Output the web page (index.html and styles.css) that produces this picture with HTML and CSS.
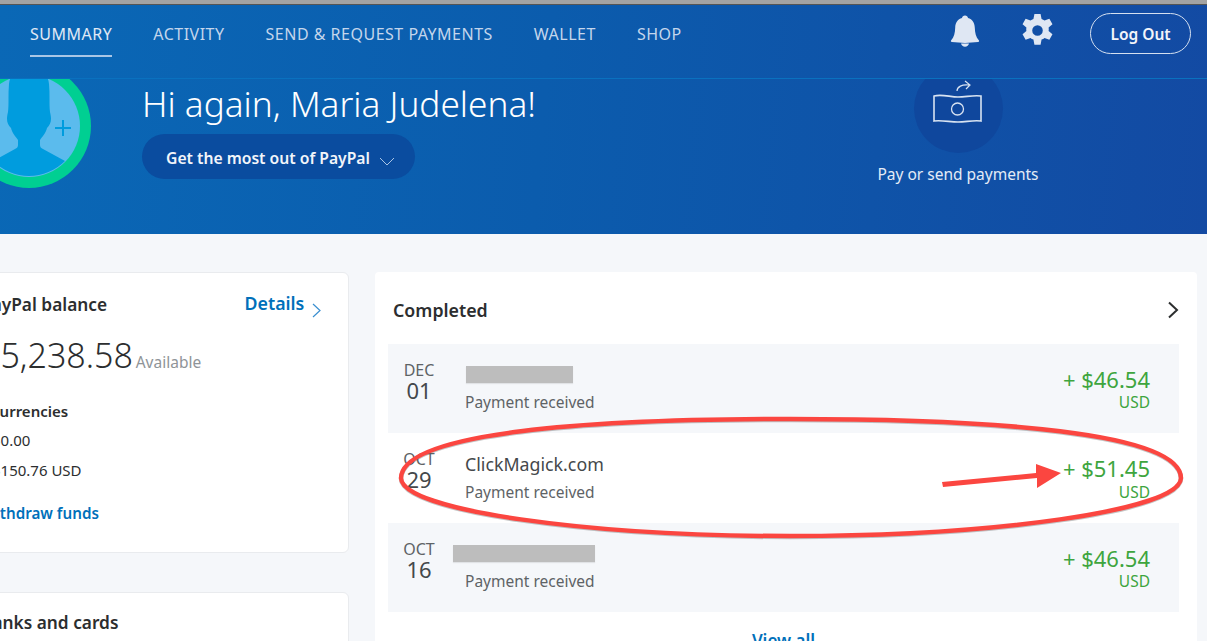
FILE: index.html
```html
<!DOCTYPE html>
<html>
<head>
  <title>PayPal Summary</title>
  <link rel="stylesheet" href="styles.css">
</head>
<body>
  <div id="top-strip"></div>

  <div id="banner">
    <div id="nav">
      <div class="nav-links">
        <a class="nav-link active">Summary</a>
        <a class="nav-link">Activity</a>
        <a class="nav-link">Send &amp; Request Payments</a>
        <a class="nav-link">Wallet</a>
        <a class="nav-link">Shop</a>
      </div>
      <div class="nav-actions">
        <svg class="bell" width="32" height="34" viewBox="0 0 32 34">
          <path fill="#dfe7f3" d="M16 1.500c1.700 0 2.800 1 3 2.600 4.400 1.300 6.600 4.800 6.800 9.600.2 5.300 1.100 9.300 4 12.600.6.700.3 1.700-.7 1.800-8.800 1.100-17.400 1.100-26.200 0-1-.1-1.300-1.100-.7-1.800 2.900-3.300 3.800-7.300 4-12.600.2-4.800 2.400-8.300 6.800-9.600.2-1.600 1.300-2.600 3-2.600z"/>
          <path fill="#dfe7f3" d="M12 29.500h8c-.4 2-2 3.200-4 3.200s-3.600-1.200-4-3.200z"/>
        </svg>
        <svg class="gear" width="33" height="33" viewBox="1.500 1 29 30">
          <path fill="#dfe7f3" fill-rule="evenodd" d="M13.200 1h5.600l.9 4.600c1 .3 1.900.8 2.700 1.400l4.400-1.600 2.800 4.900-3.500 3c.2 1 .2 2.200 0 3.200l3.500 3-2.800 4.900-4.400-1.600c-.8.600-1.700 1.100-2.700 1.400l-.9 4.800h-5.600l-.9-4.800c-1-.3-1.900-.8-2.700-1.400l-4.400 1.600-2.800-4.900 3.500-3c-.2-1-.2-2.200 0-3.200l-3.500-3 2.800-4.900 4.400 1.600c.8-.6 1.700-1.100 2.700-1.400zM16 11.200a4.800 4.800 0 1 0 0 9.600 4.800 4.800 0 0 0 0-9.600z"/>
        </svg>
        <button id="logout">Log Out</button>
      </div>
    </div>

    <div id="hero">
      <div class="avatar">
        <svg width="124" height="124" viewBox="0 0 124 124">
          <circle cx="62" cy="62" r="62" fill="#00cf92"/>
          <circle cx="62" cy="62" r="51" fill="#5bbbed"/>
          <path fill="#009cde" d="M62 4C48 4 43 10 42 20C41 30 42 40 41 48C39 56 40 60 44 64C45 69 49 73 51 76L51 81C51 83 50 84 48 85L26 97A51 51 0 0 0 98 97L76 85C74 84 73 83 73 81L73 76C75 73 79 69 80 64C84 60 85 56 83 48C82 40 83 30 82 20C81 10 76 4 62 4z"/>
          <path stroke="#009cde" stroke-width="2" fill="none" d="M96 56v16M88 64h16"/>
        </svg>
      </div>
      <div class="greeting">
        <h1>Hi again, Maria Judelena!</h1>
        <button id="getMost">Get the most out of PayPal
          <svg width="16" height="9" viewBox="0 0 16 9"><path d="M1 1l7 7 7-7" fill="none" stroke="#a9c4e6" stroke-width="1"/></svg>
        </button>
      </div>
      <div class="quick-action">
        <div class="quick-circle">
          <svg width="50" height="50" viewBox="0 0 50 50">
            <path d="M1 13c8-2 16 1 24 1s15-2 23-1v25c-8-1-15 1-23 1s-16-2-24-1z" fill="none" stroke="#d8e3f2" stroke-width="1.600"/>
            <circle cx="24.500" cy="26" r="6" fill="none" stroke="#d8e3f2" stroke-width="1.300"/>
            <path d="M24 8c0-4 5-7 12-6M32-2l5 4-4 4" fill="none" stroke="#d8e3f2" stroke-width="1.200"/>
          </svg>
        </div>
        <div class="quick-label">Pay or send payments</div>
      </div>
    </div>
  </div>

  <div id="main">
    <div class="left-col">
      <div class="card balance-card">
        <div class="balance-head">
          <span class="card-title">PayPal balance</span>
          <a class="details">Details
            <svg width="9" height="15" viewBox="0 0 9 15"><path d="M1 1l7 6.500-7 6.500" fill="none" stroke="#3a8fd0" stroke-width="1.200"/></svg>
          </a>
        </div>
        <div class="balance-amount">$5,238.58 <span class="available">Available</span></div>
        <div class="currencies">Currencies</div>
        <div class="currency-row">$0.00</div>
        <div class="currency-row">$150.76 USD</div>
        <a class="withdraw">Withdraw funds</a>
      </div>
      <div class="card banks-card">
        <span class="card-title">Banks and cards</span>
      </div>
    </div>

    <div class="card activity-card">
      <div class="activity-head">
        <span class="activity-title">Completed</span>
        <svg width="12" height="18" viewBox="0 0 12 18"><path d="M2 1.500l8 7.500-8 7.500" fill="none" stroke="#2c2e2f" stroke-width="2"/></svg>
      </div>

      <div class="tx shaded">
        <div class="tx-date"><span class="tx-month">Dec</span><span class="tx-day">01</span></div>
        <div class="tx-info">
          <div class="tx-blur blur-short"></div>
          <div class="tx-type">Payment received</div>
        </div>
        <div class="tx-amount"><span class="tx-value">+ $46.54</span><span class="tx-cur">USD</span></div>
      </div>

      <div class="tx">
        <div class="tx-date"><span class="tx-month">Oct</span><span class="tx-day">29</span></div>
        <div class="tx-info">
          <div class="tx-name">ClickMagick.com</div>
          <div class="tx-type">Payment received</div>
        </div>
        <div class="tx-amount"><span class="tx-value">+ $51.45</span><span class="tx-cur">USD</span></div>
      </div>

      <div class="tx shaded">
        <div class="tx-date"><span class="tx-month">Oct</span><span class="tx-day">16</span></div>
        <div class="tx-info">
          <div class="tx-blur blur-long"></div>
          <div class="tx-type">Payment received</div>
        </div>
        <div class="tx-amount"><span class="tx-value">+ $46.54</span><span class="tx-cur">USD</span></div>
      </div>

      <a class="view-all">View all</a>
    </div>
  </div>

  <!-- red annotation drawn on top of the screenshot -->
  <svg id="annotation" width="1207" height="641" viewBox="0 0 1207 641">
    <g class="mark-shadow" fill="none" stroke="#555" stroke-width="4.500">
      <path d="M401 479C402 433 590 420 790 420C990 420 1180 433 1181 479C1180 512 990 537 790 537C590 537 402 512 401 479z"/>
    </g>
    <g fill="none" stroke="#fb4640" stroke-width="4.500">
      <path d="M401 478C402 432 590 419 790 419C990 419 1180 432 1181 478C1180 511 990 536 790 536C590 536 402 511 401 478z"/>
    </g>
    <path fill="#fb4640" d="M942 482l94-9v-9l25 9-24 15v-10l-94 9z"/>
  </svg>
</body>
</html>
```

FILE: styles.css
```css
:root {
  --page-bg: #f5f7fa;
  --text-color: #2c2e2f;
  --muted-color: #5e6366;
  --link-color: #0070ba;
  --green-color: #3ea53e;
}

* {
  box-sizing: border-box;
}

html, body {
  margin: 0;
  height: 641px;
  overflow: hidden;
}

body {
  position: relative;
  background-color: var(--page-bg);
  color: var(--text-color);
  font-family: "Noto Sans", Lato, sans-serif;
  font-size: 15px;
}

button {
  font-family: inherit;
  cursor: pointer;
}

#top-strip {
  height: 5px;
  background-color: #a3a3a3;
  border-bottom: 1px solid #555;
}

#banner {
  height: 229px;
  background: linear-gradient(95deg, #0a68b6 0%, #0b5cad 45%, #134aa3 100%);
}

/* Nav */
#nav {
  height: 74px;
  display: flex;
  justify-content: space-between;
  align-items: flex-start;
  padding: 0 16px 0 30px;
  border-bottom: 1px solid #0a71bf;
  position: relative;
  z-index: 1;
}

.nav-links {
  display: flex;
  gap: 41px;
  padding-top: 18px;
}

.nav-link {
  height: 34px;
  font-size: 16px;
  color: #c4d6ec;
  text-transform: uppercase;
  letter-spacing: 0.5px;
  line-height: 22px;
  border-bottom: 2px solid transparent;
  white-space: nowrap;
}

.nav-link.active {
  color: #e0e9f5;
  border-bottom-color: #a9c6e6;
}

.nav-actions {
  display: flex;
  align-items: flex-start;
  padding-top: 8px;
}

.bell {
  margin: 1px 40px 0 0;
}

.gear {
  margin: 1px 36px 0 0;
}

#logout {
  width: 101px;
  height: 41px;
  background: transparent;
  color: #f2f5fa;
  border: 1.5px solid #d5e0f0;
  border-radius: 21px;
  font-size: 15.500px;
  font-weight: 600;
}

/* Hero */
#hero {
  height: 155px;
  display: flex;
  align-items: flex-start;
  overflow: hidden;
}

.avatar {
  width: 124px;
  height: 124px;
  margin: -15px 0 0 -33px;
  flex-shrink: 0;
}

.greeting {
  width: 773px;
  margin-left: 51px;
}

.greeting h1 {
  margin: 0;
  height: 55px;
  font-size: 35.200px;
  font-weight: 300;
  line-height: 48px;
  color: #fff;
}

#getMost {
  width: 273px;
  height: 45px;
  padding: 2px 0 0 24px;
  display: flex;
  align-items: center;
  gap: 9px;
  background-color: #0a4c9f;
  color: #f2f5fa;
  border: none;
  border-radius: 23px;
  font-size: 15.700px;
  font-weight: 600;
  white-space: nowrap;
}

#getMost svg {
  margin-top: 8px;
}

.quick-action {
  width: 200px;
  margin-left: -57px;
  text-align: center;
}

.quick-circle {
  width: 89px;
  height: 89px;
  margin: -15px auto 0;
  padding-top: 19px;
  border-radius: 50%;
  background-color: #0f479d;
}

.quick-circle svg {
  overflow: visible;
  display: block;
  margin: 0 auto;
}

.quick-label {
  margin-top: 10px;
  font-size: 15.500px;
  color: #e4ebf6;
}

/* Cards */
#main {
  display: flex;
  align-items: flex-start;
  gap: 26px;
  margin-left: -50px;
  padding-top: 38px;
}

.left-col {
  width: 399px;
  flex-shrink: 0;
}

.card {
  background-color: #fff;
  border-radius: 6px;
}

.balance-card, .banks-card {
  border: 1px solid #e9ebee;
  padding-left: 30px;
}

.balance-card {
  height: 281px;
  padding-top: 18px;
  padding-right: 27px;
}

.banks-card {
  height: 80px;
  margin-top: 39px;
  padding-top: 18px;
}

.balance-head {
  display: flex;
  justify-content: space-between;
  align-items: center;
}

.card-title {
  font-size: 17.300px;
  font-weight: 600;
  white-space: nowrap;
}

.details {
  font-size: 17.800px;
  font-weight: 600;
  color: var(--link-color);
}

.details svg {
  margin-left: 3px;
  vertical-align: -8px;
}

.balance-amount {
  margin-top: 13px;
  font-size: 34px;
  font-weight: 300;
  line-height: 48px;
  white-space: nowrap;
}

.available {
  margin-left: -6px;
  font-size: 15.500px;
  font-weight: 400;
  color: #8f9498;
}

.currencies {
  margin: 15px 0 0 9px;
  font-size: 15px;
  font-weight: 600;
}

.currency-row {
  margin: 9px 0 0 11px;
  font-size: 15px;
  line-height: 21px;
}

.withdraw {
  display: block;
  margin-top: 22px;
  font-size: 15.200px;
  font-weight: 600;
  color: var(--link-color);
  white-space: nowrap;
}

.activity-card {
  width: 822px;
  height: 400px;
  padding: 0 18px 0 13px;
  border-radius: 4px;
}

.activity-head {
  height: 71.500px;
  display: flex;
  justify-content: space-between;
  align-items: center;
  padding: 4px 0 0 5px;
}

.activity-title {
  font-size: 17.800px;
  font-weight: 600;
}

/* Transaction rows */
.tx {
  height: 89.500px;
  display: flex;
  align-items: stretch;
}

.tx.shaded {
  background-color: var(--page-bg);
}

.tx-date {
  width: 62px;
  padding-top: 18px;
  display: flex;
  flex-direction: column;
  align-items: center;
}

.tx-month {
  font-size: 16px;
  line-height: 17px;
  text-transform: uppercase;
  color: var(--muted-color);
}

.tx-day {
  margin-top: -1px;
  font-size: 22px;
  line-height: 24px;
  color: #44484b;
}

.tx-info {
  flex: 1;
  margin-left: 15px;
  padding-top: 20px;
}

.tx-name {
  height: 22px;
  font-size: 17.800px;
  line-height: 22px;
  color: #44484b;
}

.tx-blur {
  height: 17px;
  margin: 2px 0 8px;
  background-color: #bdbdbd;
  box-shadow: 0 1px 1px rgba(0, 0, 0, 0.08);
}

.blur-short {
  width: 107px;
  margin-left: 1px;
}

.blur-long {
  width: 142px;
  margin-left: -12px;
}

.tx-type {
  margin-top: 6px;
  font-size: 15.500px;
  color: var(--muted-color);
}

.tx-amount {
  padding: 22px 29px 0 0;
  display: flex;
  flex-direction: column;
  align-items: flex-end;
  color: var(--green-color);
}

.tx-value {
  font-size: 22px;
  line-height: 26px;
}

.tx-cur {
  margin-top: 1.500px;
  font-size: 15.500px;
  line-height: 18px;
}

.view-all {
  display: block;
  margin-top: 17px;
  text-align: center;
  font-size: 17px;
  font-weight: 600;
  color: var(--link-color);
}

/* Annotation */
#annotation {
  position: absolute;
  top: 0;
  left: 0;
  pointer-events: none;
}

.mark-shadow {
  opacity: 0.35;
}
```
